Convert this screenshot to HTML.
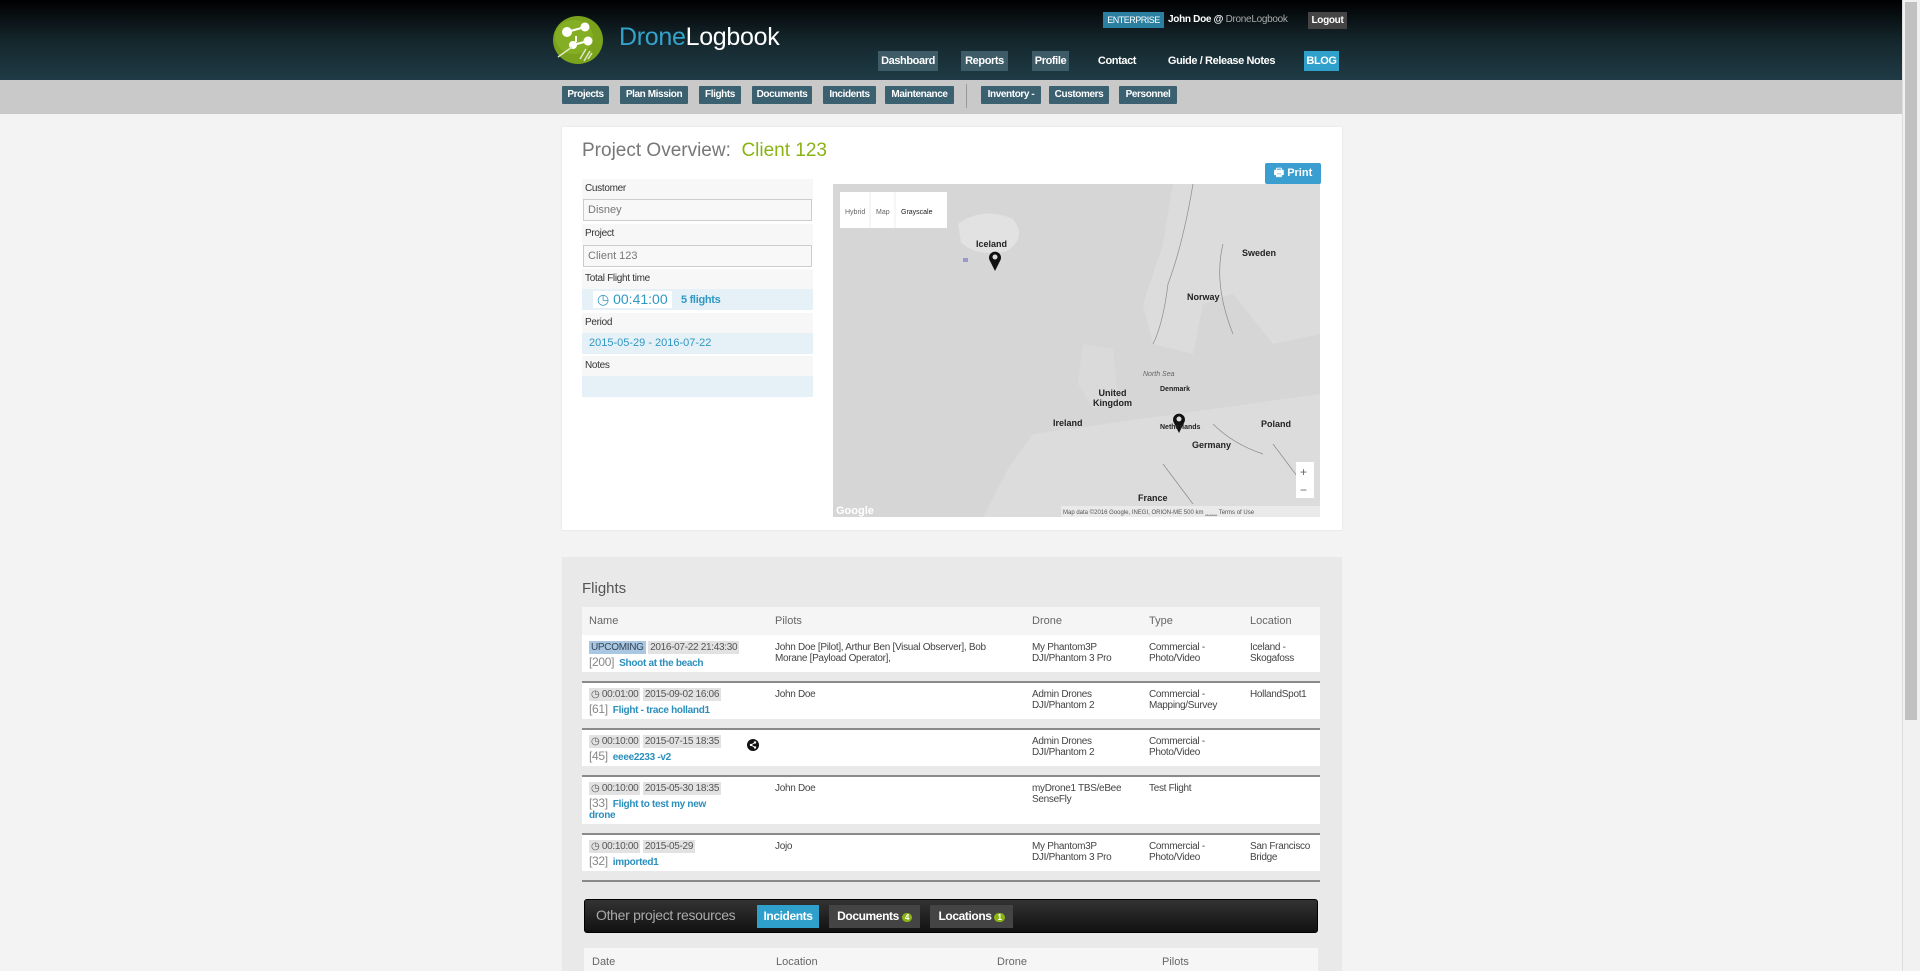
<!DOCTYPE html>
<html><head><meta charset="utf-8"><style>
*{box-sizing:border-box;margin:0;padding:0}
body{width:1920px;height:971px;overflow:hidden;background:#f3f3f3;font-family:"Liberation Sans Narrow","Liberation Sans",sans-serif;position:relative;color:#333}
.a{position:absolute;white-space:nowrap}
.hdr{left:0;top:0;width:1902px;height:80px;background:linear-gradient(#000,#14262c 50%,#1f3b45)}
.sub{left:0;top:80px;width:1902px;height:34px;background:#c9c9c9}
.nb{position:absolute;top:51px;height:20px;line-height:20px;font-size:11px;color:#fff;text-align:center;background:#3d5c68;font-weight:bold;letter-spacing:-.4px;white-space:nowrap}
.sb{position:absolute;top:86px;height:18px;line-height:18px;font-size:10px;color:#fff;text-align:center;background:#3b6070;font-weight:bold;border-radius:1px;letter-spacing:-.4px;white-space:nowrap}
.sbar{left:1902px;top:0;width:18px;height:971px;background:#f1f1f1;border-left:1px solid #ddd}
.thumb{left:1905px;top:2px;width:12px;height:718px;background:#c1c1c1}
.lbl{position:absolute;left:582px;width:231px;height:22px;background:#f7f7f7;font-size:10px;padding:4px 3px;color:#333;letter-spacing:-.3px}
.inp{position:absolute;left:583px;width:229px;height:22px;background:#f8f8f8;border:1px solid #ccc;font-family:"Liberation Sans",sans-serif;font-size:11px;color:#777;padding:4px 4px}
.blue{position:absolute;left:582px;width:231px;height:21px;background:#e5f1f6}
.th{font-size:11px;color:#666;position:absolute;top:615px}
.row{position:absolute;left:582px;width:738px;background:#fff;border-top:2px solid #8a8a8a}
.c{position:absolute;font-size:10px;color:#444;line-height:11px;letter-spacing:-.3px}
.tg{background:#e2e2e2;color:#555;padding:1px 2px;font-size:10px}
.lk{color:#2a8fbd;font-weight:bold;font-size:10px}
.num{color:#888;font-size:12px}
.ml{position:absolute;font-family:"Liberation Sans",sans-serif;font-size:9px;font-weight:bold;color:#222;white-space:nowrap}
</style></head><body>
<div class="a hdr"></div>
<div class="a sub"></div>
<div class="a sbar"></div><div class="a thumb"></div>

<svg class="a" style="left:552px;top:15px" width="52" height="50" viewBox="0 0 52 50">
<ellipse cx="26" cy="25" rx="25" ry="24" fill="#7aa21c"/>
<ellipse cx="22" cy="22" rx="19" ry="17" fill="#8ab82a" opacity=".6"/>
<circle cx="15" cy="17" r="5" fill="#fff"/><circle cx="33" cy="12" r="4.5" fill="#fff"/><circle cx="21" cy="30" r="4" fill="#fff"/><circle cx="36" cy="26" r="4.5" fill="#fff"/>
<path d="M15 17L33 12M21 30L36 26M24 21L24 27" stroke="#fff" stroke-width="2"/>
<path d="M6 42L20 32M28 44L34 34M32 46L38 36M36 44L40 38" stroke="#dfe9c4" stroke-width="1.5"/>
</svg>
<div class="a" style="left:619px;top:23px;font-family:'Liberation Sans',sans-serif;font-size:25px;color:#fff;letter-spacing:-.3px"><span style="color:#35a2cc">Drone</span>Logbook</div>

<div class="a" style="left:1103px;top:12px;width:61px;height:16px;background:#2b7fa0;color:#fff;font-size:9px;line-height:16px;text-align:center;letter-spacing:-.5px">ENTERPRISE</div>
<div class="a" style="left:1168px;top:14px;font-size:10px;color:#fff;font-weight:bold;letter-spacing:-.3px">John Doe @ <span style="color:#aaa;font-weight:normal">DroneLogbook</span></div>
<div class="a" style="left:1308px;top:12px;width:39px;height:17px;background:#444;color:#fff;font-size:10px;line-height:17px;text-align:center;font-weight:bold;letter-spacing:-.3px">Logout</div>

<div class="nb" style="left:878px;width:60px">Dashboard</div>
<div class="nb" style="left:961px;width:47px">Reports</div>
<div class="nb" style="left:1032px;width:37px">Profile</div>
<div class="nb" style="left:1093px;width:48px;background:none">Contact</div>
<div class="nb" style="left:1162px;width:119px;background:none">Guide / Release Notes</div>
<div class="nb" style="left:1304px;width:35px;background:#2fa1cc">BLOG</div>

<div class="sb" style="left:562px;width:47px">Projects</div>
<div class="sb" style="left:620px;width:68px">Plan Mission</div>
<div class="sb" style="left:699px;width:42px">Flights</div>
<div class="sb" style="left:752px;width:60px">Documents</div>
<div class="sb" style="left:823px;width:53px">Incidents</div>
<div class="sb" style="left:885px;width:69px">Maintenance</div>
<div class="a" style="left:966px;top:84px;width:1px;height:24px;background:#999"></div>
<div class="sb" style="left:981px;width:60px">Inventory -</div>
<div class="sb" style="left:1049px;width:60px">Customers</div>
<div class="sb" style="left:1119px;width:58px">Personnel</div>

<!-- panel 1 -->
<div class="a" style="left:562px;top:127px;width:780px;height:403px;background:#fff;box-shadow:0 0 2px #ddd"></div>
<div class="a" style="left:582px;top:140px;font-family:'Liberation Sans',sans-serif;font-size:19px;color:#777">Project Overview: &nbsp;<span style="color:#8ab414">Client 123</span></div>
<div class="a" style="left:1265px;top:163px;width:56px;height:21px;background:#3a9fd0;color:#fff;font-size:11px;font-weight:bold;line-height:21px;text-align:center;border-radius:2px">🖶 Print</div>

<div class="lbl" style="top:179px">Customer</div>
<div class="inp" style="top:199px">Disney</div>
<div class="lbl" style="top:224px">Project</div>
<div class="inp" style="top:245px">Client 123</div>
<div class="lbl" style="top:269px">Total Flight time</div>
<div class="blue" style="top:289px"></div>
<div class="a" style="left:593px;top:291px;background:#fff;padding:0 4px;font-family:'Liberation Sans',sans-serif;font-size:14px;color:#2f98c4">◷ 00:41:00</div>
<div class="a" style="left:681px;top:294px;font-size:11px;font-weight:bold;color:#2f98c4;letter-spacing:-.3px">5 flights</div>
<div class="lbl" style="top:313px">Period</div>
<div class="blue" style="top:333px"></div>
<div class="a" style="left:589px;top:337px;font-family:'Liberation Sans',sans-serif;font-size:11px;color:#2f98c4">2015-05-29 - 2016-07-22</div>
<div class="lbl" style="top:356px">Notes</div>
<div class="blue" style="top:376px"></div>

<!-- map -->
<svg class="a" style="left:833px;top:184px" width="487" height="333" viewBox="0 0 487 333">
<rect width="487" height="333" fill="#d6d6d6"/>
<path d="M125 40 Q150 22 180 35 Q195 55 172 68 Q140 72 128 58Z" fill="#e2e2e2"/>
<path d="M340 0 L487 0 L487 150 L440 160 L400 110 L370 120 L360 170 L320 160 L310 120 L330 60Z" fill="#dcdcdc"/>
<path d="M250 160 L280 165 L285 215 L260 225 L245 200Z" fill="#dadada"/>
<path d="M200 250 L487 210 L487 333 L150 333 L175 285Z" fill="#dcdcdc"/>
<path d="M360 0 Q350 60 335 100 Q330 140 320 160 M390 60 Q380 100 400 150 M380 240 Q400 260 430 270 M330 280 L360 320 M440 260 L470 300" stroke="#8a8a8a" fill="none" stroke-width=".7"/>
<rect x="7" y="8" width="107" height="36" fill="#fff"/>
<line x1="37" y1="8" x2="37" y2="44" stroke="#eee"/><line x1="62" y1="8" x2="62" y2="44" stroke="#eee"/>
<text x="12" y="30" font-size="7" fill="#666" font-family="Liberation Sans">Hybrid</text>
<text x="43" y="30" font-size="7" fill="#666" font-family="Liberation Sans">Map</text>
<text x="68" y="30" font-size="7" fill="#222" font-family="Liberation Sans">Grayscale</text>
<g transform="translate(162,73)"><path d="M0 14 L-5 4 A6 6 0 1 1 5 4Z" fill="#111"/><circle cy="0" r="2.5" fill="#ddd"/></g>
<g transform="translate(346,235)"><path d="M0 14 L-5 4 A6 6 0 1 1 5 4Z" fill="#111"/><circle cy="0" r="2.5" fill="#ddd"/></g>
<rect x="130" y="74" width="5" height="4" fill="#99c"/>
<rect x="463" y="278" width="18" height="36" fill="#fff"/>
<text x="467" y="292" font-size="12" fill="#666">+</text><text x="467" y="310" font-size="12" fill="#666">−</text>
<rect x="228" y="322" width="259" height="11" fill="#eee" opacity=".8"/>
<text x="230" y="330" font-size="6" fill="#555" font-family="Liberation Sans">Map data ©2016 Google, INEGI, ORION-ME   500 km ⎵⎵⎵⎵⎵    Terms of Use</text>
<text x="3" y="330" font-size="11" fill="#fff" font-family="Liberation Sans" font-weight="bold">Google</text>
</svg>
<div class="ml" style="left:976px;top:239px">Iceland</div>
<div class="ml" style="left:1242px;top:248px">Sweden</div>
<div class="ml" style="left:1187px;top:292px">Norway</div>
<div class="ml" style="left:1093px;top:388px;text-align:center">United<br>Kingdom</div>
<div class="ml" style="left:1053px;top:418px">Ireland</div>
<div class="ml" style="left:1160px;top:424px;font-size:7px">Netherlands</div>
<div class="ml" style="left:1192px;top:440px">Germany</div>
<div class="ml" style="left:1261px;top:419px">Poland</div>
<div class="ml" style="left:1138px;top:493px">France</div>
<div class="ml" style="left:1160px;top:386px;font-size:7px">Denmark</div>
<div class="ml" style="left:1143px;top:371px;font-size:7px;font-style:italic;font-weight:normal;color:#666">North Sea</div>

<!-- panel 2 -->
<div class="a" style="left:562px;top:557px;width:780px;height:414px;background:#e9e9e9"></div>
<div class="a" style="left:582px;top:580px;font-family:'Liberation Sans',sans-serif;font-size:15px;color:#555">Flights</div>
<div class="a" style="left:582px;top:607px;width:738px;height:28px;background:#f5f5f5"></div>
<div class="th" style="left:589px">Name</div><div class="th" style="left:775px">Pilots</div><div class="th" style="left:1032px">Drone</div><div class="th" style="left:1149px">Type</div><div class="th" style="left:1250px">Location</div>

<div class="row" style="top:635px;height:37px;border-top:none"></div>
<div class="row" style="top:681px;height:38px"></div>
<div class="row" style="top:728px;height:38px"></div>
<div class="row" style="top:775px;height:49px"></div>
<div class="row" style="top:833px;height:38px"></div>
<div class="a" style="left:582px;top:880px;width:738px;height:2px;background:#8a8a8a"></div>

<div class="c" style="left:589px;top:642px"><span class="tg" style="background:#a9c7e3;color:#345">UPCOMING</span> <span class="tg">2016-07-22 21:43:30</span></div>
<div class="c" style="left:589px;top:657px"><span class="num">[200]</span> &nbsp;<span class="lk">Shoot at the beach</span></div>
<div class="c" style="left:775px;top:642px">John Doe [Pilot], Arthur Ben [Visual Observer], Bob<br>Morane [Payload Operator],</div>
<div class="c" style="left:1032px;top:642px">My Phantom3P<br>DJI/Phantom 3 Pro</div>
<div class="c" style="left:1149px;top:642px">Commercial -<br>Photo/Video</div>
<div class="c" style="left:1250px;top:642px">Iceland -<br>Skogafoss</div>

<div class="c" style="left:589px;top:689px"><span class="tg">◷ 00:01:00</span> <span class="tg">2015-09-02 16:06</span></div>
<div class="c" style="left:589px;top:704px"><span class="num">[61]</span> &nbsp;<span class="lk">Flight - trace holland1</span></div>
<div class="c" style="left:775px;top:689px">John Doe</div>
<div class="c" style="left:1032px;top:689px">Admin Drones<br>DJI/Phantom 2</div>
<div class="c" style="left:1149px;top:689px">Commercial -<br>Mapping/Survey</div>
<div class="c" style="left:1250px;top:689px">HollandSpot1</div>

<div class="c" style="left:589px;top:736px"><span class="tg">◷ 00:10:00</span> <span class="tg">2015-07-15 18:35</span></div>
<div class="c" style="left:589px;top:751px"><span class="num">[45]</span> &nbsp;<span class="lk">eeee2233 -v2</span></div>
<svg class="a" style="left:747px;top:739px" width="12" height="12" viewBox="0 0 12 12"><circle cx="6" cy="6" r="6" fill="#111"/><circle cx="8" cy="3.5" r="1.2" fill="#fff"/><circle cx="8" cy="8.5" r="1.2" fill="#fff"/><circle cx="4" cy="6" r="1.2" fill="#fff"/><path d="M8 3.5L4 6L8 8.5" stroke="#fff" stroke-width=".8" fill="none"/></svg>
<div class="c" style="left:1032px;top:736px">Admin Drones<br>DJI/Phantom 2</div>
<div class="c" style="left:1149px;top:736px">Commercial -<br>Photo/Video</div>

<div class="c" style="left:589px;top:783px"><span class="tg">◷ 00:10:00</span> <span class="tg">2015-05-30 18:35</span></div>
<div class="c" style="left:589px;top:798px;width:125px;white-space:normal"><span class="num">[33]</span> &nbsp;<span class="lk">Flight to test my new drone</span></div>
<div class="c" style="left:775px;top:783px">John Doe</div>
<div class="c" style="left:1032px;top:783px">myDrone1 TBS/eBee<br>SenseFly</div>
<div class="c" style="left:1149px;top:783px">Test Flight</div>

<div class="c" style="left:589px;top:841px"><span class="tg">◷ 00:10:00</span> <span class="tg">2015-05-29</span></div>
<div class="c" style="left:589px;top:856px"><span class="num">[32]</span> &nbsp;<span class="lk">imported1</span></div>
<div class="c" style="left:775px;top:841px">Jojo</div>
<div class="c" style="left:1032px;top:841px">My Phantom3P<br>DJI/Phantom 3 Pro</div>
<div class="c" style="left:1149px;top:841px">Commercial -<br>Photo/Video</div>
<div class="c" style="left:1250px;top:841px">San Francisco<br>Bridge</div>

<div class="a" style="left:584px;top:899px;width:734px;height:34px;background:linear-gradient(#333,#111);border-radius:3px;border:1px solid #000"></div>
<div class="a" style="left:596px;top:907px;font-size:14px;color:#aaa;letter-spacing:-.3px">Other project resources</div>
<div class="a" style="left:757px;top:905px;width:62px;height:23px;background:#2f9fcc;color:#fff;font-size:12px;font-weight:bold;line-height:23px;text-align:center;letter-spacing:-.4px">Incidents</div>
<div class="a" style="left:829px;top:905px;width:91px;height:23px;background:#444;color:#fff;font-size:12px;font-weight:bold;line-height:23px;text-align:center;letter-spacing:-.4px">Documents <span style="background:#8ab414;border-radius:6px;font-size:8px;padding:0 3px">4</span></div>
<div class="a" style="left:930px;top:905px;width:83px;height:23px;background:#444;color:#fff;font-size:12px;font-weight:bold;line-height:23px;text-align:center;letter-spacing:-.4px">Locations <span style="background:#8ab414;border-radius:6px;font-size:8px;padding:0 3px">1</span></div>

<div class="a" style="left:584px;top:948px;width:734px;height:23px;background:#f6f6f6"></div>
<div class="th" style="left:592px;top:956px">Date</div><div class="th" style="left:776px;top:956px">Location</div><div class="th" style="left:997px;top:956px">Drone</div><div class="th" style="left:1162px;top:956px">Pilots</div>
</body></html>
